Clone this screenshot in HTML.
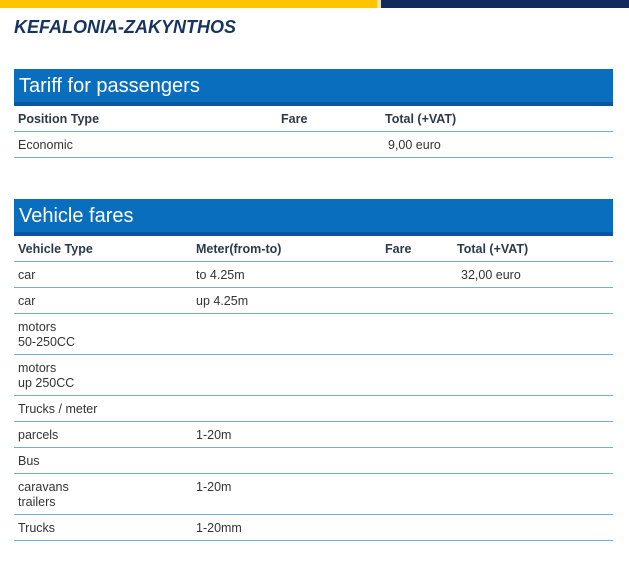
<!DOCTYPE html>
<html><head><style>
body{margin:0;width:629px;height:583px;background:#fff;position:relative;font-family:"Liberation Sans",sans-serif;overflow:hidden}
.a{position:absolute}
.t{font-size:12.5px;color:#333;line-height:15px}
.h{font-size:12.5px;color:#2b3a4a;font-weight:bold;line-height:15px}
.l{position:absolute;left:14px;width:599px;height:1px;background:#6fb0d8}
.bar{position:absolute;left:14px;width:599px;height:33px;background:#0a6ebf;border-bottom:4px solid #0a57a0;color:#fff;font-size:20px;line-height:34px;text-indent:5px}
</style></head><body>
<div class="a" style="left:0;top:0;width:377px;height:8px;background:#fdc500"></div>
<div class="a" style="left:377px;top:0;width:4px;height:8px;background:#e8e0c0"></div>
<div class="a" style="left:381px;top:0;width:248px;height:8px;background:#142a5c"></div>
<div class="a" style="left:14px;top:17px;font-size:18px;font-weight:bold;font-style:italic;color:#17345f">KEFALONIA-ZAKYNTHOS</div>

<div class="bar" style="top:69px">Tariff for passengers</div>
<div class="a h" style="left:18px;top:112px">Position Type</div>
<div class="a h" style="left:281px;top:112px">Fare</div>
<div class="a h" style="left:385px;top:112px">Total (+VAT)</div>
<div class="l" style="top:131px"></div>
<div class="a t" style="left:18px;top:138px">Economic</div>
<div class="a t" style="left:388px;top:138px">9,00 euro</div>
<div class="l" style="top:157px"></div>

<div class="bar" style="top:199px">Vehicle fares</div>
<div class="a h" style="left:18px;top:242px">Vehicle Type</div>
<div class="a h" style="left:196px;top:242px">Meter(from-to)</div>
<div class="a h" style="left:385px;top:242px">Fare</div>
<div class="a h" style="left:457px;top:242px">Total (+VAT)</div>
<div class="l" style="top:261px"></div>
<div class="a t" style="left:18px;top:268px">car</div><div class="a t" style="left:196px;top:268px">to 4.25m</div><div class="a t" style="left:461px;top:268px">32,00 euro</div>
<div class="l" style="top:287px"></div>
<div class="a t" style="left:18px;top:294px">car</div><div class="a t" style="left:196px;top:294px">up 4.25m</div>
<div class="l" style="top:313px"></div>
<div class="a t" style="left:18px;top:320px">motors<br>50-250CC</div>
<div class="l" style="top:354px"></div>
<div class="a t" style="left:18px;top:361px">motors<br>up 250CC</div>
<div class="l" style="top:395px"></div>
<div class="a t" style="left:18px;top:402px">Trucks / meter</div>
<div class="l" style="top:421px"></div>
<div class="a t" style="left:18px;top:428px">parcels</div><div class="a t" style="left:196px;top:428px">1-20m</div>
<div class="l" style="top:447px"></div>
<div class="a t" style="left:18px;top:454px">Bus</div>
<div class="l" style="top:473px"></div>
<div class="a t" style="left:18px;top:480px">caravans<br>trailers</div><div class="a t" style="left:196px;top:480px">1-20m</div>
<div class="l" style="top:514px"></div>
<div class="a t" style="left:18px;top:521px">Trucks</div><div class="a t" style="left:196px;top:521px">1-20mm</div>
<div class="l" style="top:540px"></div>
</body></html>
